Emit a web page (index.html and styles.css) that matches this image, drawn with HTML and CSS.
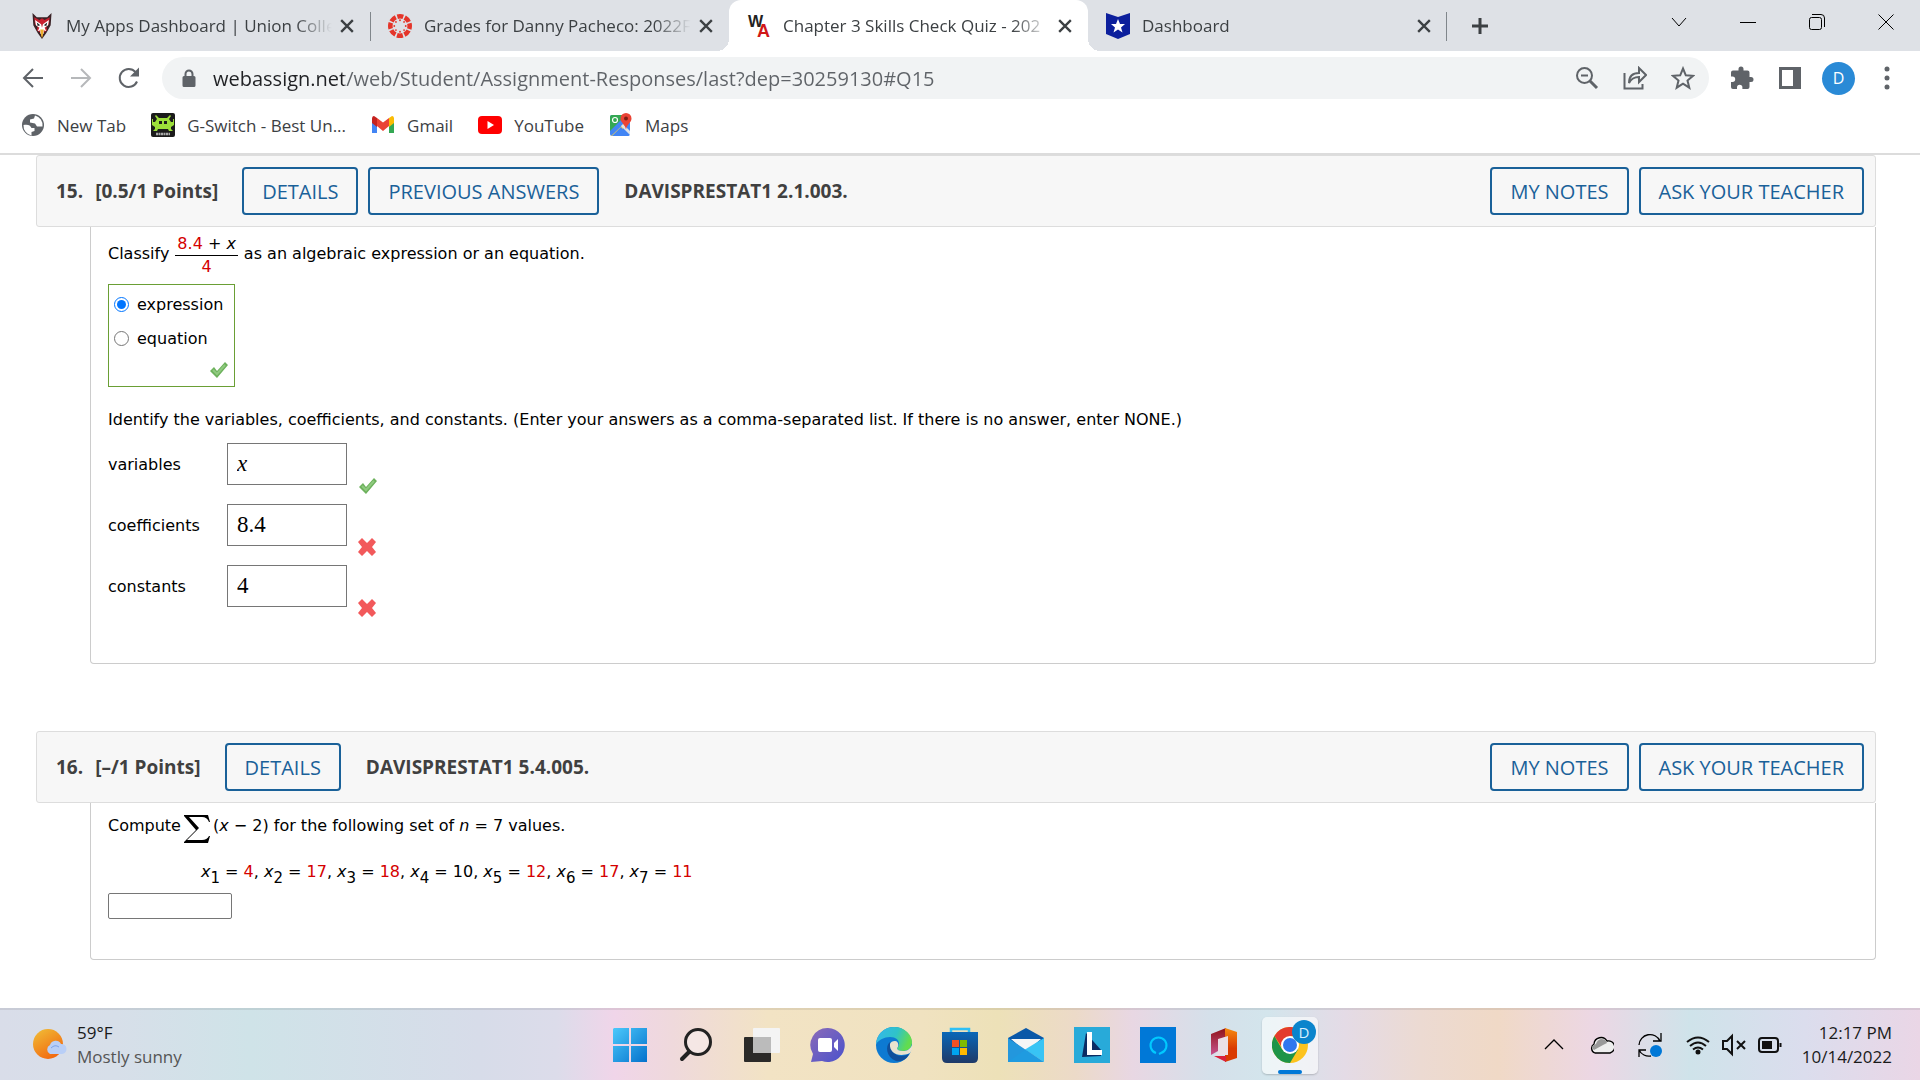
FILE: index.html
```html
<!DOCTYPE html>
<html lang="en">
<head>
    <meta charset="utf-8">
    <title>Chapter 3 Skills Check Quiz</title>
    <link rel="stylesheet" href="styles.css">
</head>
<body>
    <header class="browser">
        <div class="tab-strip">
            <div class="tab tab-first">
                <svg class="favicon" viewBox="0 0 24 30">
                    <path d="M1 0l5 5h12l5-5-1 14-5 9-5 7-5-7-5-9z" fill="#3a2226"/>
                    <path d="M3 5l6 3 3-2 3 2 6-3-1 8-3 3 1 4-6 4-6-4 1-4-3-3z" fill="#c8202f"/>
                    <path d="M4 8l7 5 1 4 1-4 7-5-1 6-4 3 2 4-3-1v4h-4v-4l-3 1 2-4-4-3z" fill="#fff"/>
                    <path d="M6 11l4 3-3 1zM18 11l-4 3 3 1z" fill="#222"/>
                    <path d="M10 19h4l-1 7-1 3-1-3z" fill="#eeb02e"/>
                </svg>
                <span class="tab-title">My Apps Dashboard | Union Colle</span>
                <button class="tab-close" aria-label="Close tab"><svg viewBox="0 0 12 12"><path d="M1 1l10 10M11 1L1 11"/></svg></button>
            </div>
            <div class="tab tab-divided">
                <svg class="favicon" viewBox="0 0 26 26">
                    <circle cx="13" cy="13" r="10.500" fill="none" stroke="#e4352a" stroke-width="5" stroke-dasharray="6.500 1.746" stroke-dashoffset="3.250"/>
                    <g fill="#e4352a">
                        <circle cx="13" cy="6.800" r="1"/><circle cx="13" cy="19.200" r="1"/><circle cx="6.800" cy="13" r="1"/><circle cx="19.200" cy="13" r="1"/>
                        <circle cx="8.600" cy="8.600" r="1"/><circle cx="17.400" cy="8.600" r="1"/><circle cx="8.600" cy="17.400" r="1"/><circle cx="17.400" cy="17.400" r="1"/>
                    </g>
                </svg>
                <span class="tab-title">Grades for Danny Pacheco: 2022F</span>
                <button class="tab-close" aria-label="Close tab"><svg viewBox="0 0 12 12"><path d="M1 1l10 10M11 1L1 11"/></svg></button>
            </div>
            <div class="tab tab-active">
                <svg class="favicon" viewBox="0 0 24 26">
                    <text x="1" y="14" font-size="16" font-weight="bold" font-family="Liberation Sans" fill="#222">W<tspan x="10" y="24" font-size="18" fill="#d01818">A</tspan></text>
                </svg>
                <span class="tab-title">Chapter 3 Skills Check Quiz - 202</span>
                <button class="tab-close" aria-label="Close tab"><svg viewBox="0 0 12 12"><path d="M1 1l10 10M11 1L1 11"/></svg></button>
            </div>
            <div class="tab tab-last">
                <svg class="favicon" viewBox="0 0 24 26">
                    <path d="M0 0l12 4 12-4v21l-12 5-12-5z" fill="#0c1f9c"/>
                    <path d="M12 6l2 5h5l-4 3.400 1.500 5-4.500-3-4.500 3 1.500-5-4-3.400h5z" fill="#fff"/>
                </svg>
                <span class="tab-title">Dashboard</span>
                <button class="tab-close" aria-label="Close tab"><svg viewBox="0 0 12 12"><path d="M1 1l10 10M11 1L1 11"/></svg></button>
            </div>
            <button class="new-tab" aria-label="New tab"><svg viewBox="0 0 18 18"><path d="M9 1v16M1 9h16"/></svg></button>
            <div class="window-controls">
                <button aria-label="Search tabs"><svg viewBox="0 0 16 16"><path d="M1 4l7 8 7-8"/></svg></button>
                <button aria-label="Minimize"><svg viewBox="0 0 16 16"><path d="M0 8.500h16"/></svg></button>
                <button aria-label="Restore"><svg viewBox="0 0 16 16"><rect x="0.500" y="3.500" width="12" height="12" rx="2"/><path d="M3 .5h9a3.500 3.500 0 0 1 3.500 3.500v9"/></svg></button>
                <button aria-label="Close"><svg viewBox="0 0 16 16"><path d="M.5.500l15 15M15.500.500l-15 15"/></svg></button>
            </div>
        </div>

        <div class="toolbar">
            <button class="tool" aria-label="Back"><svg viewBox="0 0 24 24"><path d="M22 12H4M12 3l-9 9 9 9" class="line"/></svg></button>
            <button class="tool tool-off" aria-label="Forward"><svg viewBox="0 0 24 24"><path d="M2 12h18M12 3l9 9-9 9" class="line"/></svg></button>
            <button class="tool" aria-label="Reload"><svg viewBox="0 0 24 24"><path d="M20 15.500a9 9 0 1 1-1.500-9.500" class="line"/><path d="M22 1.500v9h-9z"/></svg></button>
            <div class="address-bar">
                <svg class="lock" viewBox="0 0 14 18"><path d="M2.500 7V5a4.500 4.500 0 0 1 9 0v2H12a1.500 1.500 0 0 1 1.500 1.500v8A1.500 1.500 0 0 1 12 18H2A1.500 1.500 0 0 1 .5 16.500v-8A1.500 1.500 0 0 1 2 7zM4.500 7h5V5a2.500 2.500 0 0 0-5 0z"/></svg>
                <input class="url" type="text" aria-label="Address" value="webassign.net/web/Student/Assignment-Responses/last?dep=30259130#Q15">
                <button class="tool" aria-label="Zoom"><svg viewBox="0 0 24 24"><circle cx="9.500" cy="9.500" r="7.500" class="line"/><path d="M15 15l7 7" class="line thick"/><path d="M6 9.500h7" class="line"/></svg></button>
                <button class="tool" aria-label="Share"><svg viewBox="0 0 24 24"><path d="M1.500 7v15.500h18V18M6 17c0-7 4-10 10-10V2l7 7-7 7v-5c-5 0-8 2-10 6z" class="line"/></svg></button>
                <button class="tool" aria-label="Bookmark this tab"><svg viewBox="0 0 24 24"><path d="M12 2.500l2.800 6.800 7.200.500-5.500 4.700 1.800 7.200-6.300-4-6.300 4 1.800-7.200L2 9.800l7.200-.500z" class="line"/></svg></button>
            </div>
            <button class="tool" aria-label="Extensions"><svg viewBox="0 0 24 24"><path d="M21 11h-1.500V6.500a2 2 0 0 0-2-2h-4V3a2.500 2.500 0 0 0-5 0v1.500H3a2 2 0 0 0-2 2v4h1.500a2.700 2.700 0 0 1 0 5.400H1V21a2 2 0 0 0 2 2h4v-1.500a2.700 2.700 0 0 1 5.400 0V23h5.100a2 2 0 0 0 2-2v-5H21a2.500 2.500 0 0 0 0-5z"/></svg></button>
            <button class="tool" aria-label="Side panel"><svg viewBox="0 0 24 24"><path d="M1 1h22v22H1zM4 4v16h11V4z" fill-rule="evenodd"/></svg></button>
            <button class="avatar" aria-label="Profile">D</button>
            <button class="tool" aria-label="Menu"><svg viewBox="0 0 24 24"><circle cx="12" cy="3" r="2.500"/><circle cx="12" cy="12" r="2.500"/><circle cx="12" cy="21" r="2.500"/></svg></button>
        </div>

        <nav class="bookmarks">
            <a href="#">
                <svg viewBox="0 0 24 24"><circle cx="12" cy="12" r="11" fill="#5f6368"/><path d="M2.500 12c4-1 7 0 8 3h3v3l-3 1v3.500A10 10 0 0 1 2.500 12zM14 2.500l-1 3-4 1v3l5 1 2 3h5.500a10 10 0 0 0-7.500-11z" fill="#fff"/></svg>
                New Tab
            </a>
            <a href="#">
                <svg viewBox="0 0 24 24"><rect width="24" height="24" rx="2" fill="#1b1b1b"/><path d="M5 2l3 3h8l3-3 1 1-2 3 2 3h2V6h1v6l-3 2v2l2 2h-4l-1-2H7l-1 2H2l2-2v-2l-3-2V6h1v3h2l2-3-2-3z" fill="#9ddf3a"/><path d="M8 8h3v3H8zM13 8h3v3h-3z" fill="#1b1b1b"/><path d="M5 21h14" stroke="#aaa" stroke-width="2.500" stroke-dasharray="2 .5"/></svg>
                G-Switch - Best Un...
            </a>
            <a href="#">
                <svg viewBox="0 0 24 24"><path d="M1 5v15h5V9z" fill="#4285f4"/><path d="M23 5v15h-5V9z" fill="#34a853"/><path d="M18 5l3-2q2 0 2 3v4l-5 4z" fill="#fbbc04"/><path d="M1 10V6q0-3 2-3l3 2v9z" fill="#c5221f"/><path d="M6 5l6 4.500L18 5v8l-6 5-6-5z" fill="#ea4335"/></svg>
                Gmail
            </a>
            <a href="#">
                <svg viewBox="0 0 24 24"><rect y="3" width="24" height="18" rx="4" fill="#f00"/><path d="M9.500 8l6.500 4-6.500 4z" fill="#fff"/></svg>
                YouTube
            </a>
            <a href="#">
                <svg viewBox="0 0 24 24"><rect x="1" y="2" width="20" height="21" rx="2" fill="#4285f4"/><path d="M1 4q0-2 2-2h14L1 18z" fill="#34a853"/><path d="M2 23L20 6l1 3L6 23z" fill="#fbd34d"/><path d="M3 23l9-9 8 9z" fill="#4285f4"/><path d="M12 13l2-2 7 7v4z" fill="#dfe3e8"/><path d="M17 0a5.500 5.500 0 0 1 5.500 5.500c0 4-4.500 5.500-5.500 11-1-5.500-5.500-7-5.500-11A5.500 5.500 0 0 1 17 0z" fill="#ea4335"/><circle cx="17" cy="5.500" r="2" fill="#7d1d15"/><circle cx="6" cy="7" r="2.500" fill="none" stroke="#fff" stroke-width="1.200"/></svg>
                Maps
            </a>
        </nav>
    </header>

    <main>
        <section class="question">
            <div class="question-header">
                <span class="number">15.</span>
                <span class="points">[0.5/1 Points]</span>
                <button class="btn">DETAILS</button>
                <button class="btn">PREVIOUS ANSWERS</button>
                <span class="source">DAVISPRESTAT1 2.1.003.</span>
                <div class="question-actions">
                    <button class="btn">MY NOTES</button>
                    <button class="btn">ASK YOUR TEACHER</button>
                </div>
            </div>
            <div class="question-body">
                <div class="classify">
                    <span>Classify</span>
                    <span class="fraction"><span class="numerator"><span class="red">8.4</span> + <i>x</i></span><span class="red">4</span></span>
                    <span>as an algebraic expression or an equation.</span>
                </div>
                <div class="choices">
                    <label><input type="radio" name="kind" checked> expression</label>
                    <label><input type="radio" name="kind"> equation</label>
                    <svg class="mark" viewBox="0 0 20 18"><path d="M1 10l4-4 3 4 8-9 3 3L8 17z" fill="#6db15c"/><path d="M4 9l4 4 8-9" fill="none" stroke="#8fca7f" stroke-width="2"/></svg>
                </div>
                <p class="instructions">Identify the variables, coefficients, and constants. (Enter your answers as a comma-separated list. If there is no answer, enter NONE.)</p>
                <div class="answer">
                    <label for="variables">variables</label>
                    <input id="variables" class="answer-var" type="text" value="x">
                    <svg class="mark" viewBox="0 0 20 18"><path d="M1 10l4-4 3 4 8-9 3 3L8 17z" fill="#6db15c"/><path d="M4 9l4 4 8-9" fill="none" stroke="#8fca7f" stroke-width="2"/></svg>
                </div>
                <div class="answer">
                    <label for="coefficients">coefficients</label>
                    <input id="coefficients" type="text" value="8.4">
                    <svg class="mark" viewBox="0 0 20 18"><path d="M4 0l5 5 5-5 4 4-4 5 4 5-4 4-5-5-5 5-4-4 4-5-4-5z" fill="#f2595b"/></svg>
                </div>
                <div class="answer">
                    <label for="constants">constants</label>
                    <input id="constants" type="text" value="4">
                    <svg class="mark" viewBox="0 0 20 18"><path d="M4 0l5 5 5-5 4 4-4 5 4 5-4 4-5-5-5 5-4-4 4-5-4-5z" fill="#f2595b"/></svg>
                </div>
            </div>
        </section>

        <section class="question">
            <div class="question-header">
                <span class="number">16.</span>
                <span class="points">[–/1 Points]</span>
                <button class="btn">DETAILS</button>
                <span class="source">DAVISPRESTAT1 5.4.005.</span>
                <div class="question-actions">
                    <button class="btn">MY NOTES</button>
                    <button class="btn">ASK YOUR TEACHER</button>
                </div>
            </div>
            <div class="question-body">
                <div class="compute">
                    <label for="sum">Compute</label>
                    <svg class="sigma" viewBox="0 0 26 28"><path d="M0 0h24l2 7h-1q-2-5-7-5H5l10 11L3 25h15q5 0 7-4h1l-2 7H0v-1l12-12L0 1z"/></svg>
                    <span>(<i>x</i> − 2) for the following set of <i>n</i> = 7 values.</span>
                </div>
                <p class="values"><i>x</i><sub>1</sub> = <span class="red">4</span>, <i>x</i><sub>2</sub> = <span class="red">17</span>, <i>x</i><sub>3</sub> = <span class="red">18</span>, <i>x</i><sub>4</sub> = 10, <i>x</i><sub>5</sub> = <span class="red">12</span>, <i>x</i><sub>6</sub> = <span class="red">17</span>, <i>x</i><sub>7</sub> = <span class="red">11</span></p>
                <input id="sum" class="sum" type="text">
            </div>
        </section>
    </main>

    <footer class="taskbar">
        <div class="weather">
            <svg viewBox="0 0 34 32">
                <defs><linearGradient id="sun" x1="0" y1="0" x2=".6" y2="1"><stop offset="0" stop-color="#f0c038"/><stop offset="1" stop-color="#f26a10"/></linearGradient></defs>
                <circle cx="15" cy="15" r="15" fill="url(#sun)"/>
                <path d="M17 25a5 5 0 0 1 0-9 6 6 0 0 1 11-1 5 5 0 0 1 1 10z" fill="#b9cff7"/>
                <path d="M18 19q4-4 8-1" fill="none" stroke="#7da3ea"/>
            </svg>
            <div>
                <div>59°F</div>
                <div class="muted">Mostly sunny</div>
            </div>
        </div>

        <div class="apps">
            <button aria-label="Start"><svg viewBox="0 0 36 36">
                <defs><linearGradient id="win" x1="0" y1="0" x2="1" y2="1"><stop offset="0" stop-color="#4cc9fb"/><stop offset="1" stop-color="#0471cc"/></linearGradient></defs>
                <path d="M2 1h15v16H1V2zM19 1h16v16H19zM1 19h16v16H1zM19 19h16v16H19z" fill="url(#win)"/></svg></button>
            <button aria-label="Search"><svg viewBox="0 0 36 36"><circle cx="20" cy="15" r="12.500" fill="#f8eeee" fill-opacity=".6" stroke="#222" stroke-width="3"/><path d="M11 25l-7 7" stroke="#222" stroke-width="4" stroke-linecap="round"/></svg></button>
            <button aria-label="Task view"><svg viewBox="0 0 36 36"><rect y="10" width="27" height="25" rx="1" fill="#2b2a28"/><rect x="9" y="1" width="27" height="25" rx="1" fill="#f4f4f4"/><path d="M9 10h18v16H9z" fill="#bbb"/></svg></button>
            <button aria-label="Chat"><svg viewBox="0 0 36 36">
                <defs><linearGradient id="chat" x1="0" y1="0" x2="1" y2="1"><stop offset="0" stop-color="#8b6bb8"/><stop offset="1" stop-color="#4a52cc"/></linearGradient></defs>
                <path d="M18 1a17 17 0 1 1-6 33L1 35l2-8A17 17 0 0 1 18 1z" fill="url(#chat)"/><rect x="8" y="11" width="14" height="14" rx="2" fill="#fff"/><path d="M24 16l4-4v12l-4-4z" fill="#fff"/></svg></button>
            <button aria-label="Edge"><svg viewBox="0 0 36 36">
                <defs><linearGradient id="edge" x1="0" y1="0" x2="1" y2=".3"><stop offset="0" stop-color="#35b6ee"/><stop offset=".6" stop-color="#2fc3c8"/><stop offset="1" stop-color="#62dc4f"/></linearGradient></defs>
                <circle cx="18" cy="18" r="18" fill="#0d7ad2"/>
                <path d="M0 17C1 6 9 0 18 0c11 0 18 8 18 15 0 6-4 9-9 9-4 0-6-1-6-3 1-1 2-2 2-4 0-4-3-7-9-7C8 10 3 13 0 17z" fill="url(#edge)"/>
                <path d="M14 15c-5 4-4 15 6 19 6 1 11-2 13-7-10 5-19 0-19-12z" fill="#10509c"/>
                <path d="M14 17c-1 9 9 14 20 9l2-3v-5c-2 5-6 6-9 6-4 0-6-1-6-3 2-1 2-7-2-7q-4 0-5 3z" fill="#e9e3cf"/></svg></button>
            <button aria-label="Store"><svg viewBox="0 0 36 36">
                <defs><linearGradient id="store" x1="0" y1="0" x2="0" y2="1"><stop offset="0" stop-color="#0a67b8"/><stop offset="1" stop-color="#1f3a68"/></linearGradient></defs>
                <path d="M9 8V2h18v6" fill="none" stroke="#2fc0f5" stroke-width="2.500"/><path d="M0 5h36v26q0 5-5 5H5q-5 0-5-5z" fill="url(#store)"/>
                <path d="M10 13h7v7h-7z" fill="#f25022"/><path d="M18 13h7v7h-7z" fill="#7fba00"/><path d="M10 21h7v7h-7z" fill="#00a4ef"/><path d="M18 21h7v7h-7z" fill="#ffb900"/></svg></button>
            <button aria-label="Mail"><svg viewBox="0 0 36 36"><path d="M0 11L18 1l18 10v10H0z" fill="#0a58a8"/><path d="M3 12h30L18 25z" fill="#f6f6f6"/><path d="M0 11l18 12v12H0z" fill="#2397dd"/><path d="M36 11L17 22.500 36 35z" fill="#38c4f4"/><path d="M0 35l17.500-12.500L36 35z" fill="#1f9be0"/></svg></button>
            <button aria-label="Lenovo Vantage"><svg viewBox="0 0 36 36"><path d="M0 0h36v36H0z" fill="#28aad9"/><path d="M12 6L8 30l19-1v-6z" fill="#0b2b63"/><path d="M13 5h5v18h10v5H13z" fill="#fff"/></svg></button>
            <button aria-label="Alexa"><svg viewBox="0 0 36 36"><path d="M0 0h36v36H0z" fill="#0078d7"/><path d="M16 26a8 8 0 1 1 5 0l-2 1" fill="none" stroke="#00caff" stroke-width="2"/></svg></button>
            <button aria-label="Office"><svg viewBox="0 0 36 36">
                <defs><linearGradient id="off" x1="0" y1="0" x2="0" y2="1"><stop offset="0" stop-color="#8f1218"/><stop offset="1" stop-color="#c8558f"/></linearGradient><linearGradient id="off2" x1="0" y1="0" x2="0" y2="1"><stop offset="0" stop-color="#f58a10"/><stop offset=".6" stop-color="#da3b01"/></linearGradient></defs>
                <path d="M5 7l15-6v9l-8 3v11l-7 4z" fill="url(#off)"/><path d="M19 1l12 4v26l-12 4z" fill="url(#off2)"/><path d="M8 29h12v6z" fill="#d9203c"/><path d="M12 12l10-3v19H9l3-3z" fill="#eadfe6"/></svg></button>
            <button class="app-open" aria-label="Chrome"><svg viewBox="0 0 36 36"><circle cx="18" cy="18" r="18" fill="#fcc31e"/><path d="M2.400 9A18 18 0 0 1 33.600 9H18L11 22z" fill="#e33b2e"/><path d="M2.400 9A18 18 0 0 0 18 36l8-13.500H10.200z" fill="#1e9447"/><circle cx="18" cy="18" r="9" fill="#fff"/><circle cx="18" cy="18" r="7" fill="#2f77ee"/></svg><span class="badge">D</span></button>
        </div>

        <div class="tray">
            <svg class="tray-dark" viewBox="0 0 24 24"><path d="M3 16l9-9 9 9"/></svg>
            <svg class="tray-cloud tray-dark" viewBox="0 0 24 24"><path d="M5 20a5 5 0 0 1-1-9 7 7 0 0 1 13-3 6 6 0 0 1 3 12z" fill="#eee"/><path d="M2 15q0-3 4-4 1-4 5-5 5 0 6 4l-4 2-9 5z" fill="#999" stroke="none"/></svg>
            <svg class="tray-sync tray-dark" viewBox="0 0 24 24"><path d="M1 12A11 11 0 0 1 22 8M23 0v8h-8M1 24v-7h7M1 17a11 11 0 0 0 12 6"/><circle cx="18" cy="18" r="6" fill="#0078d7" stroke="none"/></svg>
            <svg class="thick" viewBox="0 0 24 24"><path d="M1 9q11-9 22 0M4 13q8-7 16 0M7 16.500q5-4 10 0"/><circle cx="12" cy="19" r="1.500" fill="#111"/></svg>
            <svg class="thick" viewBox="0 0 24 24"><path d="M1 8h4l5-5v18l-5-5H1zM15 8l8 8M23 8l-8 8"/></svg>
            <svg class="thick" viewBox="0 0 24 24"><rect x="1" y="5" width="19" height="14" rx="3"/><path d="M4 8h10v8H4z" fill="#111" stroke="none"/><path d="M22.500 10v4"/></svg>
            <div class="clock">
                <div>12:17 PM</div>
                <div>10/14/2022</div>
            </div>
        </div>
    </footer>
</body>
</html>
```
FILE: styles.css
```css
* {
    box-sizing: border-box;
}
body {
    margin: 0;
    min-height: 100vh;
    display: flex;
    flex-direction: column;
    background-color: #fff;
    color: #000;
    font-family: "DejaVu Sans", sans-serif;
    font-size: 16px;
}
button {
    margin: 0;
    padding: 0;
    border: none;
    background: none;
    font-family: inherit;
    cursor: pointer;
}
svg {
    display: block;
    flex: none;
}
p {
    margin: 0;
}

/* browser chrome */
.browser {
    border-bottom: 2px solid #dcdcdc;
    font-family: "Open Sans", sans-serif;
    color: #3c4043;
}
.tab-strip {
    display: flex;
    height: 51px;
    background-color: #dee1e6;
}
.tab {
    display: flex;
    align-items: center;
    width: 359px;
    padding: 0 16px 0 18px;
    position: relative;
}
.tab-first {
    width: 370px;
    padding-left: 30px;
}
.tab-divided::before,
.tab-last::after {
    content: "";
    position: absolute;
    left: 0;
    top: 12px;
    width: 1px;
    height: 29px;
    background-color: #80868b;
}
.tab-last::after {
    left: auto;
    right: 0;
}
.tab-active {
    background-color: #fff;
    border-radius: 12px 12px 0 0;
}
.tab-active::before,
.tab-active::after {
    content: "";
    position: absolute;
    bottom: 0;
    left: -12px;
    width: 12px;
    height: 12px;
    background: radial-gradient(circle at 0 0, transparent 12px, #fff 12px);
}
.tab-active::after {
    left: auto;
    right: -12px;
    background: radial-gradient(circle at 100% 0, transparent 12px, #fff 12px);
}
.favicon {
    width: 24px;
    height: 26px;
}
.tab-title {
    flex: 1;
    margin: 0 8px 0 12px;
    overflow: hidden;
    white-space: nowrap;
    font-size: 17px;
    -webkit-mask-image: linear-gradient(90deg, #000 86%, transparent);
    mask-image: linear-gradient(90deg, #000 86%, transparent);
}
.tab-close svg {
    width: 14px;
    height: 14px;
    fill: none;
    stroke: #3c4043;
    stroke-width: 2;
}
.new-tab {
    padding: 0 24px;
}
.new-tab svg {
    width: 18px;
    height: 18px;
    fill: none;
    stroke: #3c4043;
    stroke-width: 3;
}
.window-controls {
    display: flex;
    margin-left: auto;
    padding-bottom: 7px;
}
.window-controls button {
    width: 69px;
    display: flex;
    align-items: center;
    justify-content: center;
}
.window-controls svg {
    width: 16px;
    height: 16px;
    fill: none;
    stroke: #000;
}
.toolbar {
    display: flex;
    align-items: center;
    gap: 24px;
    padding: 6px 21px 0;
}
.tool svg {
    width: 24px;
    height: 24px;
    fill: #5f6368;
}
.tool-off {
    opacity: 0.45;
}
.tool .line {
    fill: none;
    stroke: #5f6368;
    stroke-width: 2;
}
.tool .thick {
    stroke-width: 3;
}
.address-bar {
    flex: 1;
    display: flex;
    align-items: center;
    gap: 24px;
    height: 42px;
    margin: 0 -3px;
    padding: 0 14px 0 20px;
    border-radius: 21px;
    background-color: #f1f3f4;
}
.lock {
    width: 14px;
    height: 18px;
    margin-right: -7px;
    fill: #5f6368;
}
.url {
    flex: 1;
    min-width: 0;
    padding: 0;
    border: none;
    outline: none;
    font-family: inherit;
    font-size: 20px;
    color: transparent;
    /* host name darker than the path */
    background: linear-gradient(90deg, #202124 131px, #5f6368 131px);
    -webkit-background-clip: text;
    background-clip: text;
}
.avatar {
    width: 33px;
    height: 33px;
    margin: 0 -4px;
    border-radius: 50%;
    background-color: #2a8ad6;
    color: #fff;
    font-size: 16px;
}
.bookmarks {
    display: flex;
    gap: 25px;
    height: 54px;
    padding: 0 21px 2px;
}
.bookmarks a {
    display: flex;
    align-items: center;
    gap: 12px;
    color: #3c4043;
    font-size: 17px;
    text-decoration: none;
}
.bookmarks svg {
    width: 24px;
    height: 24px;
}

/* questions */
main {
    flex: 1;
    padding: 0 44px 0 36px;
}
.question + .question {
    margin-top: 67px;
}
.question-header {
    display: flex;
    align-items: center;
    height: 72px;
    padding: 0 11px 0 19px;
    border: 1px solid #ddd;
    border-radius: 3px;
    background-color: #f7f7f7;
    color: #404040;
    font-family: "Open Sans", sans-serif;
    font-size: 19px;
    font-weight: bold;
}
.points {
    margin: 0 24px 0 12px;
}
.btn {
    height: 48px;
    padding: 0 18px;
    border: 2px solid #1a6199;
    border-radius: 4px;
    color: #1a6199;
    font-size: 20px;
    font-weight: 500;
}
.btn + .btn {
    margin-left: 10px;
}
.source {
    margin-left: 25px;
}
.question-actions {
    display: flex;
    margin-left: auto;
}
.question-body {
    margin-left: 54px;
    padding: 4px 17px 37px;
    border: 1px solid #ccc;
    border-top: none;
    border-radius: 0 0 4px 4px;
}
.red {
    color: #d40000;
}
.classify {
    display: flex;
    align-items: center;
    gap: 6px;
    height: 44px;
}
.fraction {
    display: flex;
    flex-direction: column;
    align-items: center;
    margin-top: 4px;
    line-height: 22px;
}
.numerator {
    padding: 0 2px;
    border-bottom: 1px solid #000;
}
.choices {
    width: 127px;
    height: 103px;
    margin-top: 9px;
    padding: 2px 5px;
    border: 1px solid #6a9f35;
}
.choices label {
    display: flex;
    align-items: center;
    gap: 8px;
    height: 34px;
}
.choices input {
    width: 15px;
    height: 15px;
    margin: 0;
}
.mark {
    width: 20px;
    height: 18px;
}
.choices .mark {
    margin: 6px 0 0 auto;
}
.instructions {
    margin: 21px 0 11px;
    line-height: 24px;
}
.answer {
    display: flex;
    align-items: center;
    height: 61px;
    padding-bottom: 19px;
}
.answer label {
    width: 119px;
}
.answer input {
    width: 120px;
    height: 42px;
    padding: 0 9px;
    border: 1px solid #767676;
    font-family: "Liberation Serif", serif;
    font-size: 23px;
}
.answer .answer-var {
    font-style: italic;
}
.answer .mark {
    align-self: flex-end;
    margin: 0 0 -10px 11px;
}
.compute {
    display: flex;
    align-items: center;
    height: 36px;
}
.sigma {
    width: 26px;
    height: 28px;
    margin: 8px 3px 0 3px;
}
.values {
    margin: 15px 0 7px;
    padding-left: 93px;
    line-height: 28px;
}
.values sub {
    font-size: 15px;
    line-height: 0;
    vertical-align: -6px;
}
.sum {
    display: block;
    width: 124px;
    height: 26px;
    margin-bottom: 40px;
    border: 1px solid #767676;
    border-radius: 2px;
}
.question:last-child .question-body {
    padding-bottom: 0;
}

/* taskbar */
.taskbar {
    display: grid;
    grid-template-columns: 1fr auto 1fr;
    align-items: center;
    height: 72px;
    border-top: 2px solid rgba(0, 0, 0, 0.08);
    background: linear-gradient(90deg, #d9dde9 0, #d7dfe9 6%, #cfe3e8 13%, #d7dce9 25%, #dcdcea 29%, #f0d5e9 32%, #efd9dc 35%, #f2e3c4 40%, #f0e2c0 48%, #ede1b8 52%, #ecdac8 56%, #e8d7e3 59%, #d5e0ea 63%, #d3e5ec 66%, #e4dbe6 70%, #ecdad2 74%, #f0d9c6 78%, #ecd7e4 83%, #cfe3ea 88%, #dbdded 94%, #ead6e6 100%);
    font-family: "Open Sans", sans-serif;
    font-size: 17px;
    line-height: 24px;
    color: #1a1a1a;
}
.weather {
    display: flex;
    align-items: center;
    gap: 10px;
    padding-left: 33px;
}
.weather svg {
    width: 34px;
    height: 32px;
}
.muted {
    color: #555;
}
.apps {
    display: flex;
    gap: 10px;
}
.apps button {
    position: relative;
    display: flex;
    align-items: center;
    justify-content: center;
    width: 56px;
    height: 57px;
}
.apps svg {
    width: 36px;
    height: 36px;
}
.apps .app-open {
    border-radius: 5px;
    background-color: rgba(255, 255, 255, 0.6);
    box-shadow: 0 1px 2px rgba(0, 0, 0, 0.2);
}
.app-open::after {
    content: "";
    position: absolute;
    left: 16px;
    bottom: 0;
    width: 24px;
    height: 4px;
    border-radius: 2px;
    background-color: #0078d7;
}
.badge {
    position: absolute;
    top: 3px;
    right: 2px;
    width: 24px;
    height: 24px;
    border-radius: 50%;
    background-color: #0a84cc;
    color: #d8efff;
    font-size: 15px;
    line-height: 24px;
}
.tray {
    display: flex;
    align-items: center;
    justify-content: flex-end;
    gap: 12px;
    padding-right: 28px;
}
.tray svg {
    width: 24px;
    height: 24px;
    fill: none;
    stroke: #111;
}
.tray .tray-cloud {
    margin: 0 0 0 12px;
}
.tray .tray-sync {
    margin: 0 12px;
}
.tray .tray-dark {
    stroke: #000;
    stroke-width: 1.3;
}
.tray .thick {
    stroke-width: 2;
}
.clock {
    margin-left: 8px;
    text-align: right;
}
```
